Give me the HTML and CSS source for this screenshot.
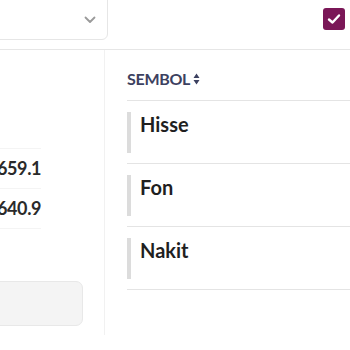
FILE: index.html
```html
<!DOCTYPE html>
<html lang="tr">
<head>
<meta charset="UTF-8">
<title>Portföy</title>
<link rel="stylesheet" href="styles.css">
</head>
<body>

<div class="topbar">
    <div class="select">
        <svg class="chevron" width="12" height="8" viewBox="0 0 12 8"><path d="M1.5 1.5 L6 6 L10.5 1.5" fill="none" stroke="#9a9a9a" stroke-width="1.8" stroke-linecap="round" stroke-linejoin="round"/></svg>
    </div>
    <div class="check">
        <svg width="14" height="12" viewBox="0 0 14 12"><path d="M2 6.5 L5.5 9.5 L12 2.5" fill="none" stroke="#fff" stroke-width="2.4" stroke-linecap="round" stroke-linejoin="round"/></svg>
    </div>
</div>

<div class="main">
    <div class="left">
        <div class="vals">
            <div class="val empty"></div>
            <div class="val">₺659.1</div>
            <div class="val">₺640.9</div>
        </div>
        <div class="btn"></div>
    </div>
    <div class="right">
        <div class="head">SEMBOL <span class="sort">
            <svg width="7" height="12" viewBox="0 0 7 12"><path d="M3.5 0.5 L6.5 5 L0.5 5 Z M3.5 11.5 L6.5 7 L0.5 7 Z" fill="#3c4160"/></svg>
        </span></div>
        <div class="row"><span class="bar"></span><span class="name">Hisse</span></div>
        <div class="row"><span class="bar"></span><span class="name">Fon</span></div>
        <div class="row"><span class="bar"></span><span class="name">Nakit</span></div>
    </div>
</div>

</body>
</html>
```

FILE: styles.css
```css
body {
    margin: 0;
    width: 350px;
    height: 350px;
    overflow: hidden;
    background: #fff;
    font-family: Lato, "Noto Sans", sans-serif;
    color: #222;
}
.topbar {
    height: 49px;
    border-bottom: 1px solid #e6e6e6;
    display: flex;
    justify-content: space-between;
    align-items: flex-start;
}
.select {
    margin-left: -20px;
    margin-top: -6px;
    width: 128px;
    height: 46px;
    border: 1px solid #e6e6e6;
    border-radius: 6px;
    display: flex;
    align-items: center;
    justify-content: flex-end;
    padding-right: 11px;
    box-sizing: border-box;
}
.chevron {
    margin-top: 6px;
}
.check {
    margin-top: 8px;
    margin-right: 5px;
    width: 22px;
    height: 22px;
    border-radius: 3px;
    background: #7a1757;
    display: flex;
    align-items: center;
    justify-content: center;
}
.main {
    display: grid;
    grid-template-columns: 105px 1fr;
}
.left {
    height: 285px;
    border-right: 1px solid #f1f1f1;
    overflow: hidden;
}
.vals {
    margin-top: 59px;
    margin-left: -13px;
}
.val {
    height: 38px;
    border-bottom: 1px solid #f4f4f4;
    width: 54px;
    font-size: 18px;
    font-weight: 700;
    letter-spacing: -0.4px;
    color: #2a2a2a;
    display: flex;
    align-items: center;
    padding-bottom: 1px;
    box-sizing: content-box;
}
.val.empty {
    height: 38px;
}
.btn {
    margin-top: 52px;
    margin-left: -10px;
    width: 93px;
    height: 45px;
    box-sizing: border-box;
    background: #f4f4f4;
    border: 1px solid #e8e8e8;
    border-radius: 7px;
}
.right {
    padding-left: 22px;
}
.head {
    height: 51px;
    border-bottom: 1px solid #e4e4e4;
    display: flex;
    align-items: flex-end;
    padding-bottom: 12px;
    box-sizing: border-box;
    font-size: 16px;
    font-weight: 700;
    color: #3c4160;
    letter-spacing: -0.3px;
}
.sort {
    margin-left: 3px;
    margin-bottom: 3px;
    display: flex;
}
.row {
    height: 51px;
    padding-top: 11px;
    border-bottom: 1px solid #e4e4e4;
    display: flex;
    align-items: flex-start;
}
.bar {
    width: 4px;
    height: 41px;
    background: #dcdcdc;
    margin-right: 9px;
}
.name {
    font-size: 20px;
    font-weight: 700;
    line-height: 24px;
    color: #1f1f1f;
}
```
